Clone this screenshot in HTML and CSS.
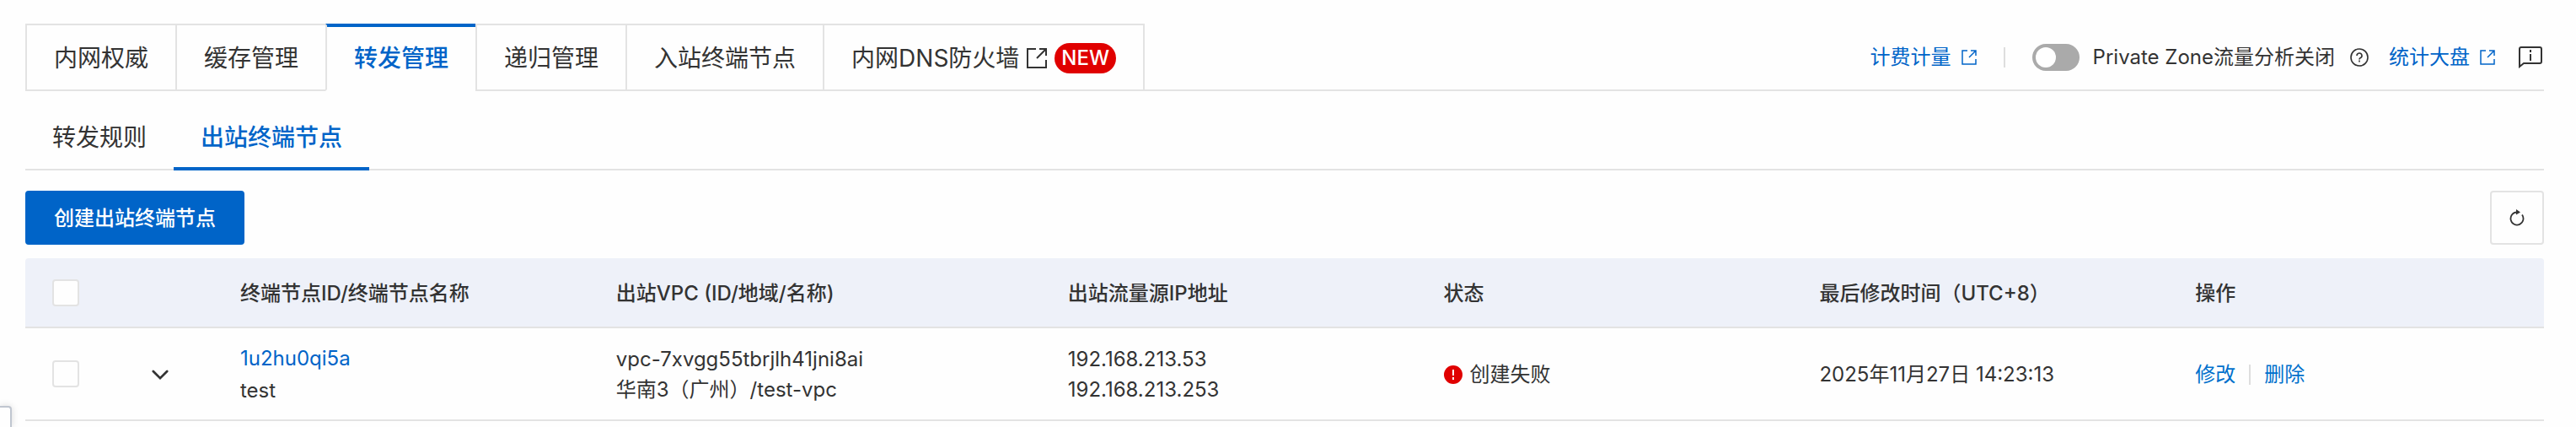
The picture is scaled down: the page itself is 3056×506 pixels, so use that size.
FILE: index.html
```html
<!DOCTYPE html>
<html lang="zh-CN">
<head>
    <meta charset="UTF-8">
    <meta name="viewport" content="width=device-width, initial-scale=1.0">
    <title>出站终端节点</title>
    <link rel="stylesheet" href="styles.css">
</head>
<body>

    <div class="page">
        <header class="topbar">
            <nav class="tabs">
                <a class="tab" href="#">内网权威</a>
                <a class="tab" href="#">缓存管理</a>
                <a class="tab active" href="#">转发管理</a>
                <a class="tab" href="#">递归管理</a>
                <a class="tab" href="#">入站终端节点</a>
                <a class="tab" href="#">
                    <span>内网DNS防火墙</span>
                    <svg class="tab-icon" viewBox="0 0 24 24" fill="none" stroke="currentColor" stroke-width="2">
                        <path d="M11 1H1v22h22V14M12 12L22 2M15 1h8v8"/>
                    </svg>
                    <span class="badge">NEW</span>
                </a>
            </nav>

            <div class="tools">
                <a class="link" href="#">计费计量
                    <svg class="link-icon" viewBox="0 0 18 18" fill="none" stroke="currentColor" stroke-width="1.500">
                        <path d="M7 1H1v16h16v-6M9 9l8-8M11 1h6v6"/>
                    </svg>
                </a>
                <span class="divider"></span>
                <label class="switch">
                    <input type="checkbox" class="toggle">
                    <span>Private Zone流量分析关闭</span>
                </label>
                <svg class="help" viewBox="0 0 22 22" fill="none" stroke="currentColor" stroke-width="1.600">
                    <circle cx="11" cy="11" r="10"/>
                    <path d="M8 9a3 3 0 1 1 4 2.800q-1 .5-1 1.700"/>
                    <path d="M11 14.500v2"/>
                </svg>
                <a class="link" href="#">统计大盘
                    <svg class="link-icon" viewBox="0 0 18 18" fill="none" stroke="currentColor" stroke-width="1.500">
                        <path d="M7 1H1v16h16v-6M9 9l8-8M11 1h6v6"/>
                    </svg>
                </a>
                <svg class="feedback" viewBox="0 0 28 26" fill="none" stroke="currentColor" stroke-width="2">
                    <path d="M1 24V3q0-2 2-2h22q2 0 2 2v15q0 2-2 2H6z"/>
                    <path d="M14 9v8M14 4v3"/>
                </svg>
            </div>
        </header>

        <nav class="subtabs">
            <a class="subtab" href="#">转发规则</a>
            <a class="subtab active" href="#">出站终端节点</a>
        </nav>

        <div class="actions">
            <button class="create">创建出站终端节点</button>
            <button class="refresh" aria-label="刷新">
                <svg viewBox="0 0 20 20" fill="none" stroke="currentColor" stroke-width="1.800">
                    <path d="M16 6.500A7.500 7.500 0 1 1 10 3.500"/>
                    <path d="M9 0l5 3.500-5 3z" fill="currentColor" stroke="none"/>
                </svg>
            </button>
        </div>

        <table class="endpoints">
            <thead>
                <tr>
                    <th class="col-check"><input type="checkbox" class="check" aria-label="全选"></th>
                    <th class="col-expand"></th>
                    <th>终端节点ID/终端节点名称</th>
                    <th class="col-vpc">出站VPC (ID/地域/名称)</th>
                    <th>出站流量源IP地址</th>
                    <th>状态</th>
                    <th>最后修改时间（UTC+8）</th>
                    <th>操作</th>
                </tr>
            </thead>
            <tbody>
                <tr>
                    <td class="check-cell"><input type="checkbox" class="check" aria-label="选择 test"></td>
                    <td>
                        <button class="expand" aria-label="展开">
                            <svg viewBox="0 0 22 14" fill="none" stroke="currentColor" stroke-width="3" stroke-linecap="round">
                                <path d="M2 2l9 9 9-9"/>
                            </svg>
                        </button>
                    </td>
                    <td class="name"><a href="#">1u2hu0qi5a</a><br>test</td>
                    <td>vpc-7xvgg55tbrjlh41jni8ai<br>华南3（广州）/test-vpc</td>
                    <td>192.168.213.53<br>192.168.213.253</td>
                    <td>
                        <div class="status">
                            <svg viewBox="0 0 22 22">
                                <circle cx="11" cy="11" r="11" fill="#e00000"/>
                                <path d="M11 5v7M11 14v3" stroke="#fff" stroke-width="2"/>
                            </svg>
                            <span>创建失败</span>
                        </div>
                    </td>
                    <td>2025年11月27日 14:23:13</td>
                    <td>
                        <div class="ops">
                            <a href="#">修改</a>
                            <span class="divider"></span>
                            <a href="#">删除</a>
                        </div>
                    </td>
                </tr>
            </tbody>
        </table>
    </div>

    <div class="side-handle"></div>

</body>
</html>
```

FILE: styles.css
```css
* {
    box-sizing: border-box;
}
body {
    margin: 0;
    min-height: 100vh;
    position: relative;
    background-color: #fefefe;
    color: #333;
    font-family: Inter, "Noto Sans CJK SC", sans-serif;
    font-size: 24px;
    line-height: 36px;
}
a {
    color: #0064c8;
    text-decoration: none;
}
svg {
    display: block;
    flex: none;
}
button {
    font: inherit;
    cursor: pointer;
}
.page {
    padding: 28px 38px 0 30px;
}

/* top tabs */
.topbar {
    display: flex;
    justify-content: space-between;
    border-bottom: 2px solid #e3e3e3;
}
.tabs {
    display: flex;
    margin-bottom: -2px;
}
.tab {
    display: flex;
    align-items: center;
    height: 80px;
    padding: 2px 32px 0;
    border-top: 2px solid #e3e3e3;
    border-left: 2px solid #e3e3e3;
    border-bottom: 2px solid #e3e3e3;
    color: #333;
    font-size: 28px;
}
.tab:last-child {
    border-right: 2px solid #e3e3e3;
}
.tab.active {
    border-bottom-color: #fefefe;
    box-shadow: inset 0 2px #0064c8;
    border-top-color: #0064c8;
    color: #0064c8;
    font-weight: 500;
}
.tab-icon {
    width: 24px;
    height: 24px;
    margin: 0 9px;
}
.badge {
    padding: 0 8px;
    border-radius: 18px;
    background-color: #e00000;
    color: #fff;
    font-size: 24px;
    font-weight: 500;
}

/* links on the right */
.tools {
    display: flex;
    align-items: center;
    padding-top: 2px;
}
.link {
    display: flex;
    align-items: center;
    gap: 12px;
}
.link-icon {
    width: 18px;
    height: 18px;
}
.divider {
    width: 2px;
    height: 24px;
    background-color: #dedede;
}
.tools .divider {
    margin: 0 32px;
}
.switch {
    display: flex;
    align-items: center;
    gap: 16px;
}
.toggle {
    appearance: none;
    width: 56px;
    height: 32px;
    margin: 0;
    padding: 4px;
    border-radius: 16px;
    background-color: #aaa;
}
.toggle::before {
    content: "";
    display: block;
    width: 24px;
    height: 24px;
    border-radius: 50%;
    background-color: #fff;
}
.help {
    width: 22px;
    height: 22px;
    margin: 0 24px 0 18px;
}
.feedback {
    width: 28px;
    height: 26px;
    margin: 0 2px 0 28px;
}

/* second level tabs */
.subtabs {
    display: flex;
    margin-top: 14px;
    border-bottom: 2px solid #e3e3e3;
}
.subtab {
    height: 80px;
    margin-bottom: -2px;
    padding: 0 32px;
    color: #333;
    font-size: 28px;
    line-height: 82px;
}
.subtab.active {
    box-shadow: inset 0 -4px #0064c8;
    color: #0064c8;
    font-weight: 500;
}

.actions {
    display: flex;
    justify-content: space-between;
    margin: 24px 0 16px;
}
.create {
    height: 64px;
    padding: 2px 32px 0;
    border: 2px solid #0064c8;
    border-radius: 4px;
    background-color: #0064c8;
    color: #fff;
    font-weight: 500;
}
.refresh {
    display: flex;
    align-items: center;
    justify-content: center;
    width: 64px;
    height: 64px;
    padding: 0;
    border: 2px solid #e3e3e3;
    border-radius: 4px;
    background-color: #fefefe;
    color: #333;
}
.refresh svg {
    width: 20px;
    height: 20px;
}

/* table */
.endpoints {
    width: 100%;
    table-layout: fixed;
    border-collapse: separate;
    border-spacing: 0;
}
.endpoints th,
.endpoints td {
    padding: 2px 32px 0;
    border-bottom: 2px solid #e3e3e3;
    text-align: left;
    vertical-align: middle;
}
.endpoints th {
    height: 83px;
    background-color: #eef1f9;
    font-weight: 500;
}
.endpoints th:first-child {
    border-top-left-radius: 4px;
}
.endpoints th:last-child {
    border-top-right-radius: 4px;
}
.endpoints td {
    height: 110px;
}
.endpoints .col-check,
.endpoints .check-cell {
    padding-top: 0;
}
.endpoints .name {
    line-height: 38px;
}
.col-check {
    width: 96px;
}
.col-expand {
    width: 127px;
}
.col-vpc {
    width: 536px;
}
.check {
    appearance: none;
    display: block;
    width: 32px;
    height: 32px;
    margin: 0;
    border: 2px solid #e3e3e3;
    border-radius: 4px;
    background-color: #fefefe;
}
.expand {
    display: block;
    margin: 0 auto;
    padding: 0;
    border: none;
    background: none;
    color: #333;
}
.expand svg {
    width: 20px;
    height: 13px;
}
.status {
    display: flex;
    align-items: center;
    gap: 9px;
}
.status svg {
    width: 22px;
    height: 22px;
}
.ops {
    display: flex;
    align-items: center;
    gap: 16px;
}
.ops a {
    color: #0070cc;
}

/* drawer handle peeking in at the left edge */
.side-handle {
    position: absolute;
    left: 0;
    bottom: 0;
    width: 14px;
    height: 25px;
    border-top: 2px solid #c0c6d0;
    border-right: 2px solid #c0c6d0;
    border-top-right-radius: 4px;
    background-color: #fefefe;
    box-shadow: 0 0 8px rgba(0, 0, 0, 0.15);
}
```
